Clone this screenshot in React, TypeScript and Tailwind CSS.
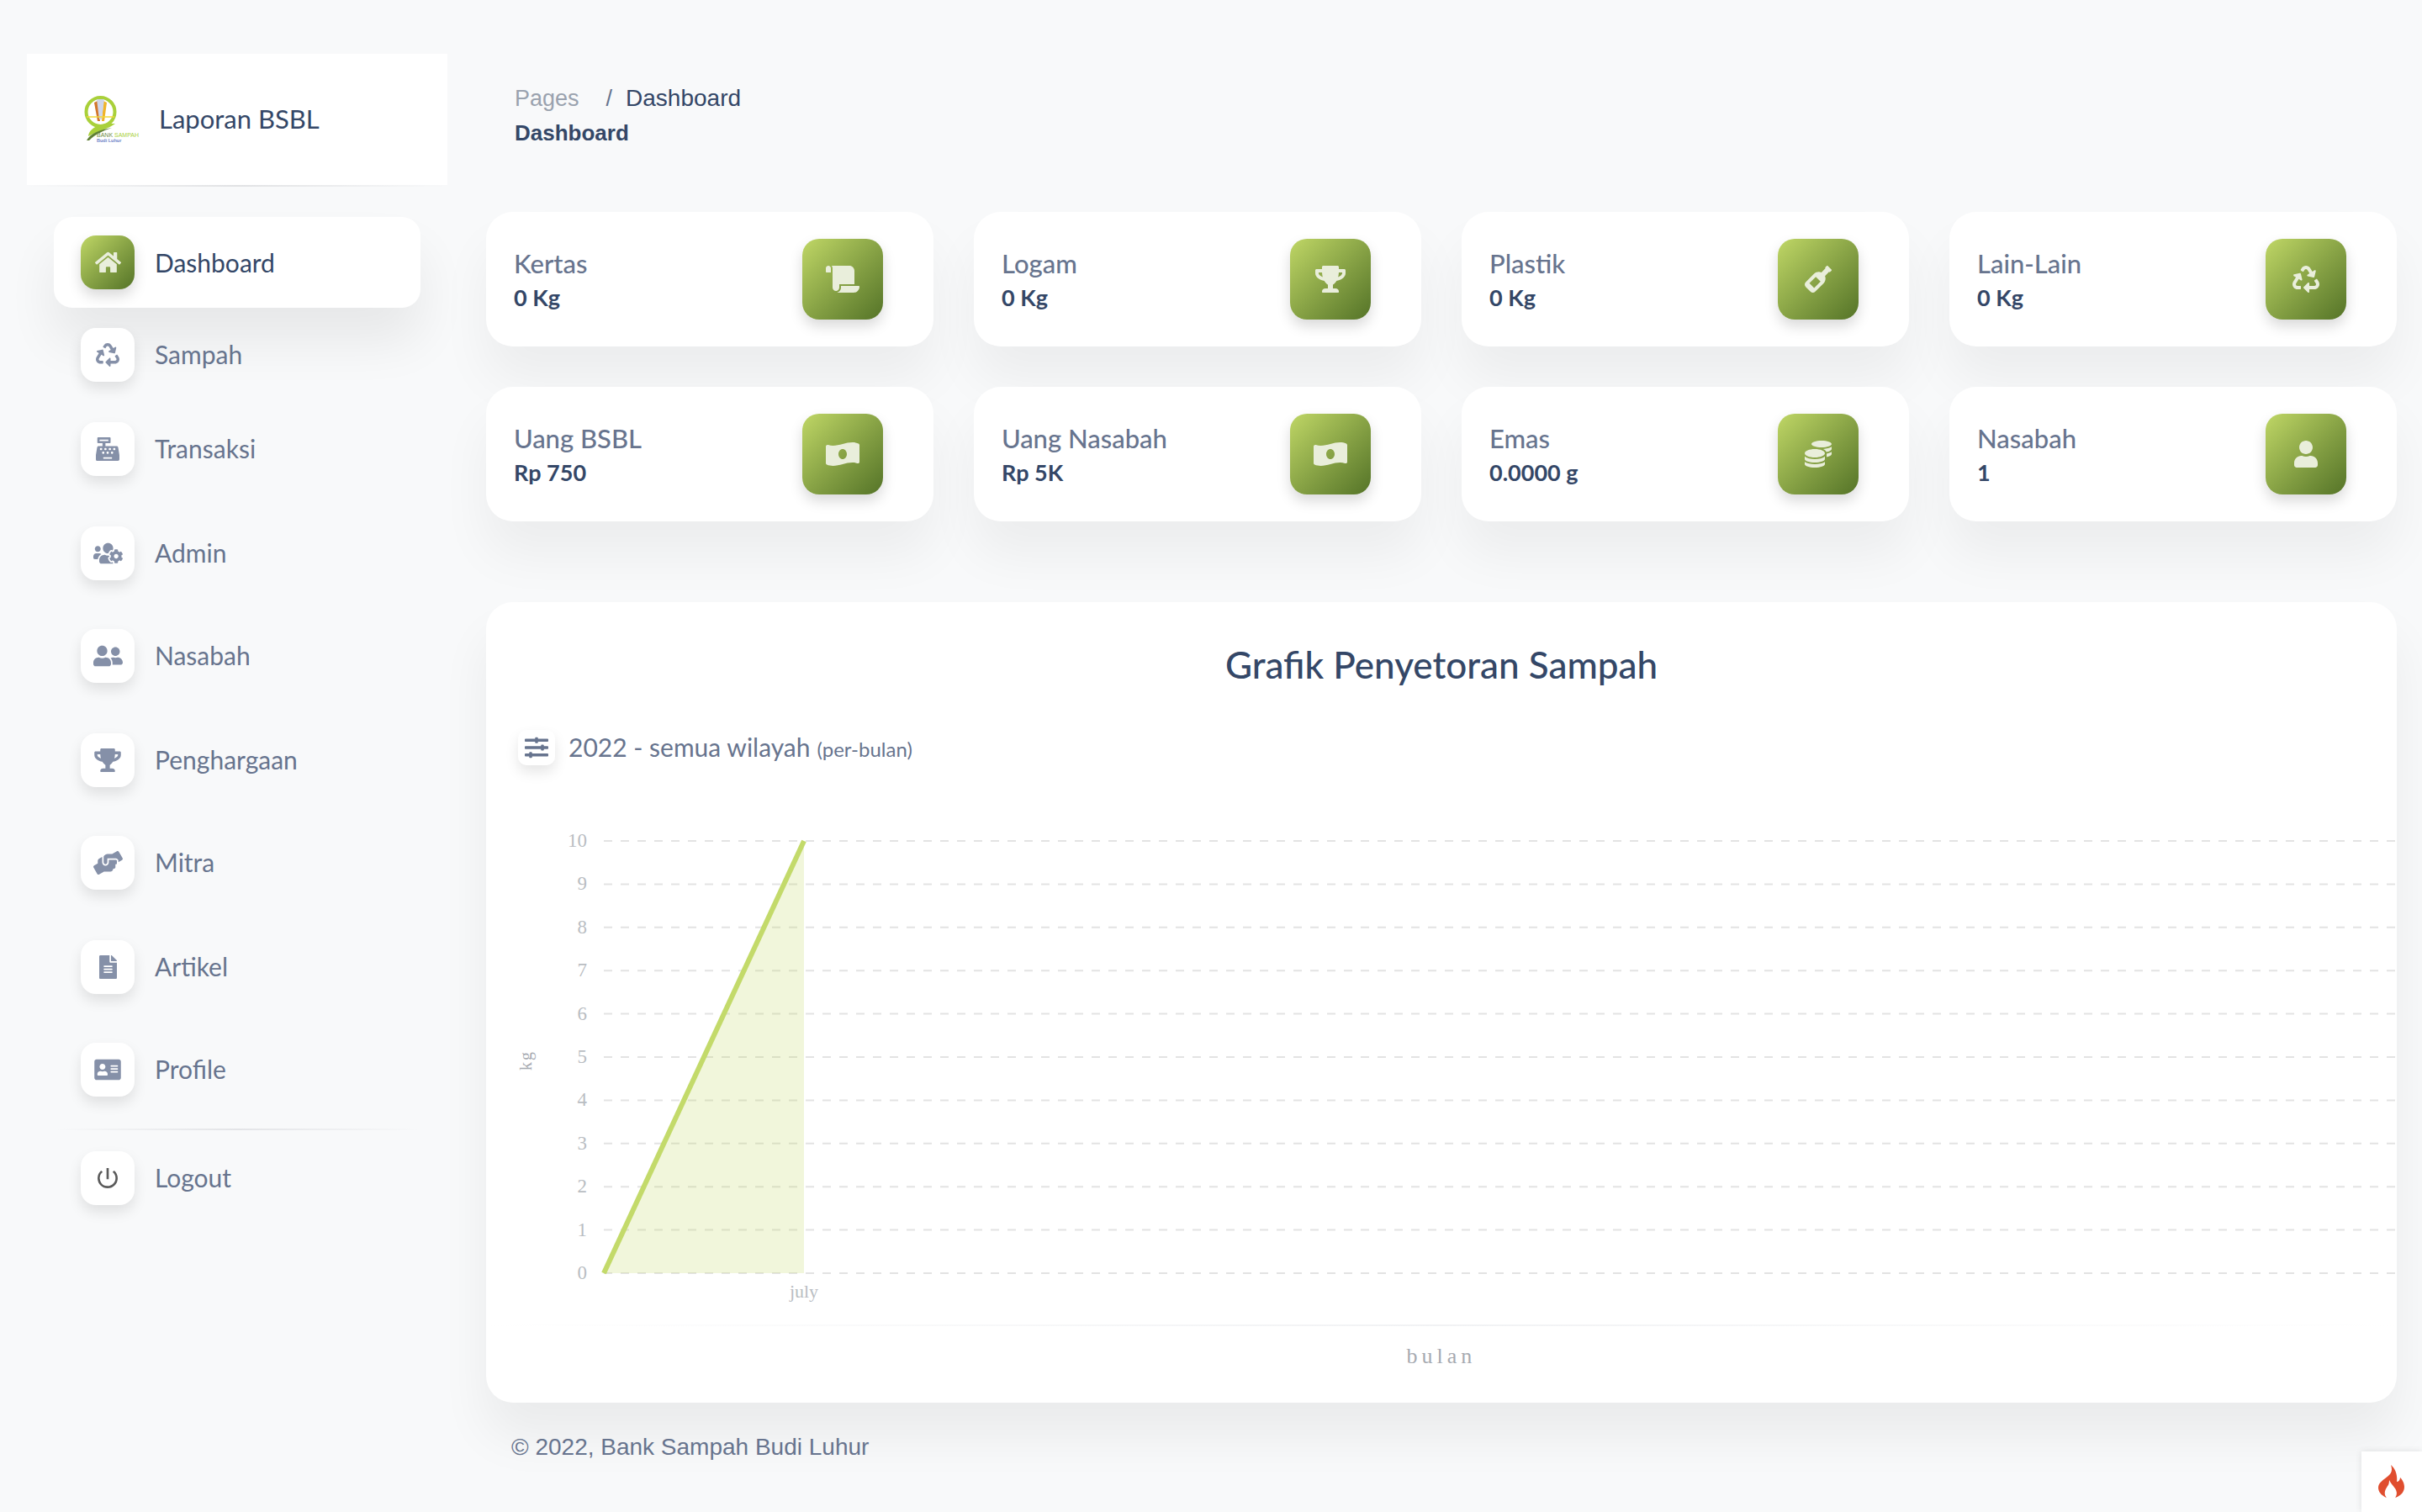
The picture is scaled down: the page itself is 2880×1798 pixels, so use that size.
import type { ReactNode } from "react";
import {
  FaAddressCard,
  FaCashRegister,
  FaCoins,
  FaFileAlt,
  FaHandsHelping,
  FaHome,
  FaMoneyBillWaveAlt,
  FaRecycle,
  FaScroll,
  FaSlidersH,
  FaTrophy,
  FaUser,
  FaUserFriends,
  FaUsersCog,
  FaWineBottle,
} from "react-icons/fa";
import { MdPowerSettingsNew } from "react-icons/md";

const quick = { fontFamily: "Lato, 'Noto Sans', sans-serif" };
const arial = { fontFamily: "'Liberation Sans', sans-serif" };

// mt values come from the uneven row pitch of the original sidebar
const navItems = [
  { label: "Sampah", icon: <FaRecycle className="h-[28px] w-[28px]" />, mt: "mt-[2px]" },
  { label: "Transaksi", icon: <FaCashRegister className="h-[28px] w-[28px]" />, mt: "mt-[4px]" },
  { label: "Admin", icon: <FaUsersCog className="h-[28px] w-[35px]" />, mt: "mt-[16px]" },
  { label: "Nasabah", icon: <FaUserFriends className="h-[28px] w-[35px]" />, mt: "mt-[14px]" },
  { label: "Penghargaan", icon: <FaTrophy className="h-[28px] w-[32px]" />, mt: "mt-[16px]" },
  { label: "Mitra", icon: <FaHandsHelping className="h-[28px] w-[35px]" />, mt: "mt-[14px]" },
  { label: "Artikel", icon: <FaFileAlt className="h-[28px] w-[21px]" />, mt: "mt-[16px]" },
  { label: "Profile", icon: <FaAddressCard className="h-[28px] w-[32px]" />, mt: "mt-[14px]" },
];

const stats = [
  { title: "Kertas", value: "0 Kg", icon: <FaScroll className="h-[32px] w-[40px]" /> },
  { title: "Logam", value: "0 Kg", icon: <FaTrophy className="h-[32px] w-[36px]" /> },
  { title: "Plastik", value: "0 Kg", icon: <FaWineBottle className="h-[32px] w-[32px]" /> },
  { title: "Lain-Lain", value: "0 Kg", icon: <FaRecycle className="h-[32px] w-[32px]" /> },
  { title: "Uang BSBL", value: "Rp 750", icon: <FaMoneyBillWaveAlt className="h-[32px] w-[40px]" /> },
  { title: "Uang Nasabah", value: "Rp 5K", icon: <FaMoneyBillWaveAlt className="h-[32px] w-[40px]" /> },
  { title: "Emas", value: "0.0000 g", icon: <FaCoins className="h-[32px] w-[32px]" /> },
  { title: "Nasabah", value: "1", icon: <FaUser className="h-[32px] w-[28px]" /> },
];

function NavRow({ label, icon, mt }: { label: string; icon: ReactNode; mt: string }) {
  return (
    <div className={`flex h-[108px] items-center pl-[32px] ${mt}`}>
      <div className="flex h-[64px] w-[64px] items-center justify-center rounded-[18px] bg-white text-[#8590a8] shadow-[0_8px_16px_rgba(0,0,0,0.1)]">
        {icon}
      </div>
      <span className="ml-[24px] pb-[2px] text-[30px] text-[#67748e]">{label}</span>
    </div>
  );
}

function Logo() {
  return (
    <svg viewBox="0 0 70 56" className="h-[56px] w-[70px]">
      <circle cx="19.5" cy="19" r="17" fill="none" stroke="#a9d03a" strokeWidth="4" />
      <path d="M12 8l4 22h3l-3-24z" fill="#d2772b" />
      <path d="M27 8l-3 22h-3l2-24z" fill="#f0b429" />
      <path d="M15 4h9l-3 24h-3z" fill="#cfd6ea" />
      <path d="M3 25h33" stroke="#f2d83a" strokeWidth="1.5" />
      <path d="M5 48c1-10 14-16 32-15-8 6-18 8-32 15z" fill="#a9d03a" />
      <path d="M3 53c4-8 16-13 30-15-12 4-20 8-27 15z" fill="#5f7f35" />
      <text x="15" y="49" fontSize="7" fontFamily="Liberation Sans, sans-serif" fill="#6f8a45">
        BANK <tspan fill="#a9d03a">SAMPAH</tspan>
      </text>
      <text x="15" y="55" fontSize="5.5" fontWeight="700" fontFamily="Liberation Sans, sans-serif" fill="#6d83c7">
        Budi Luhur
      </text>
    </svg>
  );
}

function Chart() {
  const ticks = [10, 9, 8, 7, 6, 5, 4, 3, 2, 1, 0];
  const top = 20;
  const step = 51.4;
  const bottom = top + step * 10;
  return (
    <svg viewBox="0 0 2272 595" className="mt-[69px] h-[595px] w-full" fontFamily="'Liberation Serif', serif">
      {ticks.map((t, i) => (
        <g key={t}>
          <line x1="140" x2="2272" y1={top + i * step} y2={top + i * step} stroke="#e3e3e3" strokeWidth="2" strokeDasharray="10 10" />
          <text x="120" y={top + i * step + 7} textAnchor="end" fontSize="23" fill="#b9bdc2">
            {t}
          </text>
        </g>
      ))}
      <polygon points={`140,${bottom} 378,${top} 378,${bottom}`} fill="#c3da6a" fillOpacity="0.24" />
      <line x1="140" y1={bottom} x2="378" y2={top} stroke="#c3da6a" strokeWidth="6" />
      <text x="378" y={bottom + 29} textAnchor="middle" fontSize="22" fill="#b9bdc2">
        july
      </text>
      <text x="0" y="0" transform={`translate(54 ${top + 261}) rotate(-90)`} textAnchor="middle" fontSize="20" letterSpacing="2" fill="#a6aab1">
        kg
      </text>
    </svg>
  );
}

export default function App() {
  return (
    <div className="relative flex h-[1798px] w-[2880px] overflow-hidden bg-[#f8f9fa]" style={quick}>
      <aside className="w-[578px] shrink-0 pl-[32px] pt-[64px]">
        <div className="flex h-[156px] w-[500px] items-center bg-white pl-[68px]">
          <Logo />
          <span className="ml-[19px] pb-[2px] text-[31px] text-[#344767]">Laporan BSBL</span>
        </div>
        <div className="h-[2px] w-[500px] bg-gradient-to-r from-transparent via-[#e1e2e4] to-transparent" />
        <nav className="mt-[36px] w-[500px] pl-[32px] pr-[32px]">
          <div className="flex h-[108px] items-center rounded-[22px] bg-white pl-[32px] shadow-[0_40px_60px_rgba(0,0,0,0.07)]">
            <div className="flex h-[64px] w-[64px] items-center justify-center rounded-[18px] bg-gradient-to-br from-[#c0d766] to-[#557428] text-[#e9eedb] shadow-[0_8px_16px_rgba(0,0,0,0.15)]">
              <FaHome className="h-[28px] w-[31px]" />
            </div>
            <span className="ml-[24px] text-[30px] text-[#344767]">Dashboard</span>
          </div>
          <div>
            {navItems.map((item) => (
              <NavRow key={item.label} {...item} />
            ))}
          </div>
          <div className="mt-[16px] h-[2px] bg-gradient-to-r from-transparent via-[#e3e4e7] to-transparent" />
          <NavRow
            label="Logout"
            icon={<MdPowerSettingsNew className="h-[32px] w-[32px] text-[#5a5a5a]" />}
            mt="mt-[3px]"
          />
        </nav>
      </aside>

      <main className="w-[2272px] shrink-0">
        <div className="h-[252px] pl-[34px] pt-[97px]" style={arial}>
          <div className="flex text-[27px] leading-[40px]">
            <span className="text-[#9aa2ae]">Pages</span>
            <span className="ml-[32px] text-[#67748e]">/</span>
            <span className="ml-[16px] text-[28px] text-[#344767]">Dashboard</span>
          </div>
          <div className="mt-[3px] text-[26px] font-bold leading-[36px] text-[#344767]">Dashboard</div>
        </div>

        <div className="grid grid-cols-4 gap-[48px]">
          {stats.map((s) => (
            <div key={s.title} className="flex h-[160px] items-center justify-between rounded-[32px] bg-white pl-[33px] pr-[60px] shadow-[0_40px_60px_rgba(0,0,0,0.05)]">
              <div>
                <div className="text-[31px] font-medium leading-[40px] text-[#67748e]">{s.title}</div>
                <div className="mt-[2px] text-[27px] font-bold leading-[37px] text-[#344767]">{s.value}</div>
              </div>
              <div className="flex h-[96px] w-[96px] items-center justify-center rounded-[20px] bg-gradient-to-br from-[#c0d766] to-[#557428] text-[#e9eedb] shadow-[0_8px_16px_rgba(0,0,0,0.15)]">
                {s.icon}
              </div>
            </div>
          ))}
        </div>

        <section className="mt-[96px] h-[952px] rounded-[32px] bg-white pt-[42px] shadow-[0_40px_60px_rgba(0,0,0,0.06)]">
          <h1 className="text-center text-[44px] font-medium leading-[64px] text-[#344767]">Grafik Penyetoran Sampah</h1>
          <div className="ml-[38px] mt-[44px] flex items-center">
            <div className="flex h-[42px] w-[44px] items-center justify-center rounded-[10px] bg-white text-[#67748e] shadow-[0_8px_16px_rgba(0,0,0,0.1)]">
              <FaSlidersH className="h-[28px] w-[28px]" />
            </div>
            <span className="ml-[16px] text-[30px] text-[#67748e]">2022 - semua wilayah</span>
            <span className="ml-[8px] mt-[4px] text-[24px] text-[#67748e]">(per-bulan)</span>
          </div>
          <Chart />
          <div className="h-[2px] bg-gradient-to-r from-transparent via-[#f1f2f4] to-transparent" />
          <div className="mt-[20px] text-center text-[26px] leading-[32px] tracking-[5px] text-[#a6aab1]" style={{ fontFamily: "'Liberation Serif', serif" }}>
            bulan
          </div>
        </section>

        <div className="ml-[30px] mt-[33px] text-[28px] leading-[40px] text-[#67748e]" style={arial}>
          © 2022, Bank Sampah Budi Luhur
        </div>
      </main>

      <div className="absolute bottom-0 right-0 flex h-[72px] w-[72px] items-center justify-center bg-white shadow-[0_0_8px_rgba(0,0,0,0.1)]">
        <svg viewBox="0 0 32 40" className="h-[40px] w-[32px]">
          <path
            d="M15 0C17 6 16 10 12 13C6 18 0 21 0 27C0 33 5 37 10 39C7 36 7 31 10 27C11 25 13 24 13 18C15 22 17 24 20 28C22 31 23 35 20 39C26 37 31 33 31 26C31 21 28 17 26 15C26 18 24 20 22 20C23 13 21 5 15 0Z"
            fill="#e04e2f"
          />
        </svg>
      </div>
    </div>
  );
}
